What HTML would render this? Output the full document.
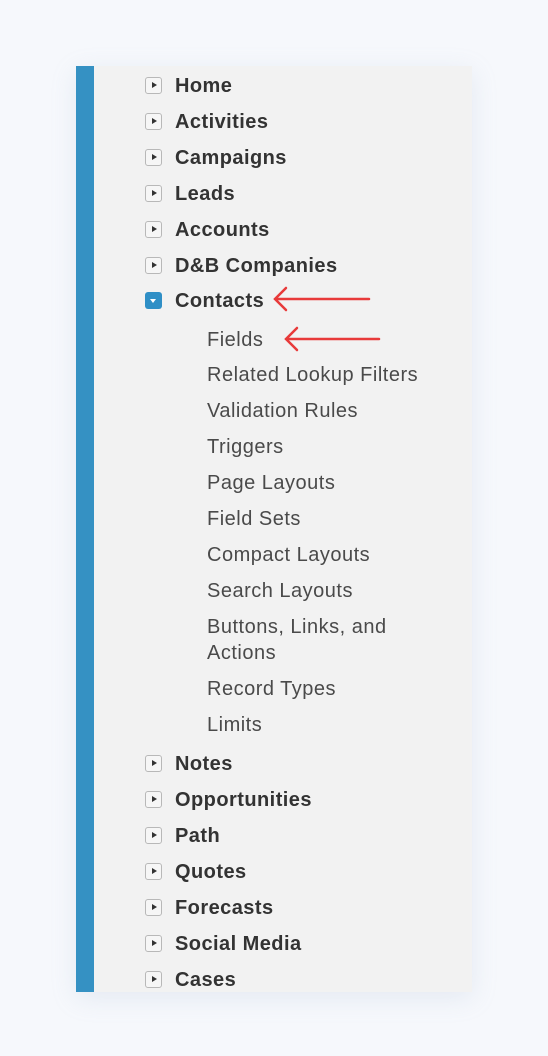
<!DOCTYPE html>
<html><head><meta charset="utf-8"><style>
body{margin:0;width:548px;height:1056px;background:#f6f8fc;position:relative;overflow:hidden;font-family:"Liberation Sans",Arial,sans-serif}
.panel{position:absolute;left:76px;top:66px;width:396px;height:926px;background:#f2f2f2;box-shadow:0 6px 24px rgba(150,170,200,.18)}
.bar{position:absolute;left:76px;top:66px;width:18px;height:926px;background:#3591c3}
.m{position:absolute;left:175px;font-size:20px;letter-spacing:0.45px;font-weight:bold;color:#333;line-height:26px;white-space:nowrap}
.s{position:absolute;left:207px;font-size:20px;letter-spacing:0.5px;color:#4a4a4a;line-height:26px;white-space:nowrap}
.i{position:absolute;left:145px;border:1px solid #b8b8b8;border-radius:3px;background:#f6f6f6;box-sizing:border-box;width:17px;height:17px}
.i:after{content:"";position:absolute;left:6px;top:4px;border-left:5px solid #333;border-top:3.5px solid transparent;border-bottom:3.5px solid transparent}
.o{position:absolute;left:145px;width:17px;height:17px;border-radius:3px;background:#2f8fc6}
.o:after{content:"";position:absolute;left:5px;top:7px;border-top:4px solid #fff;border-left:3.5px solid transparent;border-right:3.5px solid transparent}
</style></head><body>
<div class="panel"></div><div class="bar"></div>

<div class="i" style="top:77px"></div><div class="m" style="top:73px">Home</div>
<div class="i" style="top:113px"></div><div class="m" style="top:109px">Activities</div>
<div class="i" style="top:149px"></div><div class="m" style="top:145px">Campaigns</div>
<div class="i" style="top:185px"></div><div class="m" style="top:181px">Leads</div>
<div class="i" style="top:221px"></div><div class="m" style="top:217px">Accounts</div>
<div class="i" style="top:257px"></div><div class="m" style="top:253px">D&amp;B Companies</div>
<div class="o" style="top:292px"></div><div class="m" style="top:288px">Contacts</div>

<div class="s" style="top:327px">Fields</div>
<div class="s" style="top:362px">Related Lookup Filters</div>
<div class="s" style="top:398px">Validation Rules</div>
<div class="s" style="top:434px">Triggers</div>
<div class="s" style="top:470px">Page Layouts</div>
<div class="s" style="top:506px">Field Sets</div>
<div class="s" style="top:542px">Compact Layouts</div>
<div class="s" style="top:578px">Search Layouts</div>
<div class="s" style="top:614px">Buttons, Links, and<br>Actions</div>
<div class="s" style="top:676px">Record Types</div>
<div class="s" style="top:712px">Limits</div>

<div class="i" style="top:755px"></div><div class="m" style="top:751px">Notes</div>
<div class="i" style="top:791px"></div><div class="m" style="top:787px">Opportunities</div>
<div class="i" style="top:827px"></div><div class="m" style="top:823px">Path</div>
<div class="i" style="top:863px"></div><div class="m" style="top:859px">Quotes</div>
<div class="i" style="top:899px"></div><div class="m" style="top:895px">Forecasts</div>
<div class="i" style="top:935px"></div><div class="m" style="top:931px">Social Media</div>
<div class="i" style="top:971px"></div><div class="m" style="top:967px">Cases</div>

<svg style="position:absolute;left:0;top:0" width="548" height="1056">
<g stroke="#e83a3a" stroke-width="2.5" fill="none" stroke-linecap="round">
<path d="M275 299H369M286 288L275 299L286 310"/>
<path d="M286 339H379M297 328L286 339L297 350"/>
</g></svg>
</body></html>
